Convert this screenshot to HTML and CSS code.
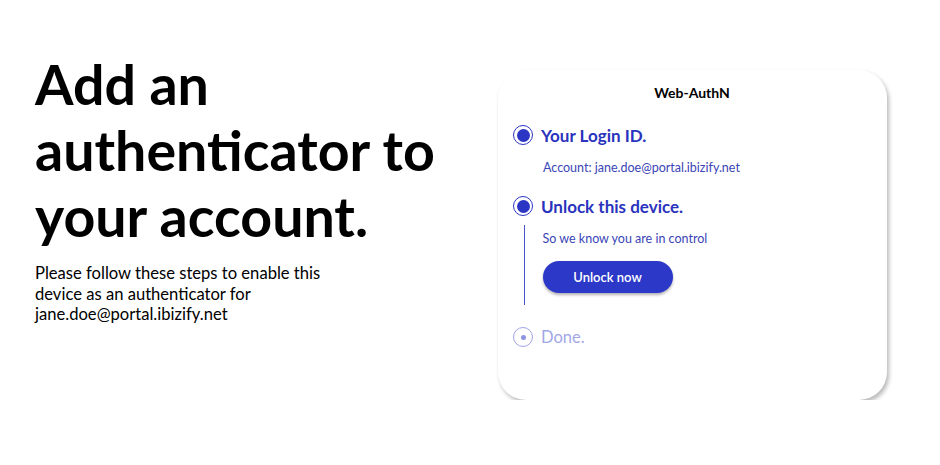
FILE: index.html
```html
<!DOCTYPE html>
<html lang="en">

<head>
    <meta charset="UTF-8">
    <meta name="viewport" content="width=device-width, initial-scale=1.0">
    <title>Web-AuthN</title>
    <link rel="stylesheet" href="styles.css">
</head>

<body>
    <div class="page">
        <div class="intro">
            <h1>Add an authenticator to your account.</h1>
            <p>Please follow these steps to enable this<br>
                device as an authenticator for<br>
                jane.doe@portal.ibizify.net</p>
        </div>

        <div class="card">
            <div class="card-title">Web-AuthN</div>

            <div class="step done-step">
                <div class="step-head">
                    <span class="dot"></span>
                    <span class="step-name">Your Login ID.</span>
                </div>
                <div class="step-body">
                    Account: jane.doe@portal.ibizify.net
                </div>
            </div>

            <div class="step active">
                <div class="step-head">
                    <span class="dot"></span>
                    <span class="step-name">Unlock this device.</span>
                </div>
                <div class="step-body line">
                    <div class="hint">So we know you are in control</div>
                    <button class="btn">Unlock now</button>
                </div>
            </div>

            <div class="step todo">
                <div class="step-head">
                    <span class="dot"></span>
                    <span class="step-name">Done.</span>
                </div>
            </div>
        </div>
    </div>
</body>

</html>
```

FILE: styles.css
```css
body {
    margin: 0;
    background: #fff;
    font-family: Lato, "Noto Sans", sans-serif;
    color: #000;
}

.page {
    display: flex;
    justify-content: space-between;
    padding: 51px 53px 0 35px;
}

.intro {
    width: 420px;
}

.intro h1 {
    margin: 0;
    font-size: 55.5px;
    line-height: 66px;
    font-weight: 700;
}

.intro p {
    margin: 14px 0 0;
    font-size: 16.6px;
    line-height: 20.5px;
}

.card {
    margin-top: 19px;
    width: 389px;
    height: 330px;
    box-sizing: border-box;
    border-radius: 28px;
    background: #fff;
    box-shadow: 2px 3px 4px rgba(0, 0, 0, 0.28);
    padding: 14px 16px 0 15px;
}

.card-title {
    text-align: center;
    font-size: 14px;
    font-weight: 700;
    line-height: 18px;
    margin-bottom: 21px;
}

.step-head {
    display: flex;
    align-items: center;
    gap: 8px;
    height: 24px;
}

.dot {
    width: 20px;
    height: 20px;
    box-sizing: border-box;
    border: 1.5px solid #2b36c4;
    border-radius: 50%;
    display: flex;
    align-items: center;
    justify-content: center;
}

.dot::after {
    content: "";
    width: 13px;
    height: 13px;
    border-radius: 50%;
    background: #2b36c4;
}

.step-name {
    font-size: 17px;
    font-weight: 700;
    color: #2a33bd;
}

.step-body {
    font-size: 12.5px;
    color: #3a45b6;
    padding: 13px 0 0 30px;
}

.done-step {
    margin-bottom: 19px;
}

.step-body.line {
    margin: 7px 0 0 11px;
    padding: 6px 0 12px 17.5px;
    border-left: 1.5px solid #4a54c9;
}

.hint {
    line-height: 16px;
}

.btn {
    display: block;
    margin-top: 14px;
    width: 130px;
    height: 32px;
    border: none;
    border-radius: 16px;
    background: #2c38c8;
    color: #fff;
    font-family: inherit;
    font-size: 13px;
    font-weight: 600;
    box-shadow: 0 2px 3px rgba(0, 0, 0, 0.3);
}

.todo {
    margin-top: 20px;
}

.todo .dot {
    border-color: #9ea3e4;
    border-width: 1px;
}

.todo .dot::after {
    width: 5px;
    height: 5px;
    background: #8e94df;
}

.todo .step-name {
    font-weight: 400;
    color: #a2a7e6;
    font-size: 16.5px;
}
```
